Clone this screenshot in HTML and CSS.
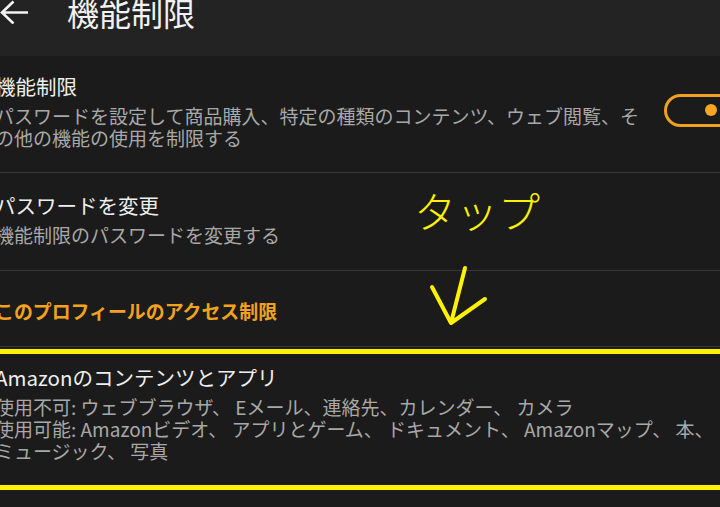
FILE: index.html
```html
<!DOCTYPE html>
<html lang="ja">
<head>
  <meta charset="UTF-8">
  <meta name="viewport" content="width=device-width, initial-scale=1">
  <title>機能制限</title>
  <link rel="stylesheet" href="styles.css">
</head>
<body>

<header class="app-bar">
  <svg class="back" width="28" height="24" viewBox="0 0 28 24">
    <path d="M28 12.5 H2 M13.5 1.5 L2 12.5 L13.5 23.5" fill="none" stroke="#f2f2f2" stroke-width="2.6"/>
  </svg>
  <h1>機能制限</h1>
</header>

<main class="list">
  <!-- main switch -->
  <div class="row">
    <div class="row-text">
      <div class="row-title">機能制限</div>
      <div class="row-sub">パスワードを設定して商品購入、特定の種類のコンテンツ、ウェブ閲覧、その他の機能の使用を制限する</div>
    </div>
    <span class="toggle on"></span>
  </div>

  <div class="row">
    <div class="row-text">
      <div class="row-title">パスワードを変更</div>
      <div class="row-sub">機能制限のパスワードを変更する</div>
    </div>
  </div>

  <div class="section-label">このプロフィールのアクセス制限</div>

  <div class="row marked">
    <div class="row-text">
      <div class="row-title">Amazonのコンテンツとアプリ</div>
      <div class="row-sub">使用不可: ウェブブラウザ、 Eメール、連絡先、カレンダー、 カメラ</div>
      <div class="row-sub">使用可能: Amazonビデオ、 アプリとゲーム、 ドキュメント、 Amazonマップ、 本、 ミュージック、 写真</div>
    </div>
  </div>

  <div class="row">
    <div class="row-text">
      <div class="row-title">ウェブ、ソーシャルネットワーク、共有</div>
    </div>
  </div>
</main>

<!-- hand-drawn annotation -->
<div class="tap-note">タップ</div>
<svg class="tap-arrow" width="70" height="68" viewBox="0 0 70 68">
  <path d="M40 6 L26 61 M7 25 L26 61 L60 37" fill="none" stroke="#fff200" stroke-width="4" stroke-linecap="round" stroke-linejoin="round"/>
</svg>

</body>
</html>
```

FILE: styles.css
```css
body { margin: 0; background: #1b1b1b; color: #eeeeee; font-family: "Noto Sans CJK JP", "Noto Sans", sans-serif; width: 720px; height: 507px; overflow: hidden; position: relative; }

.app-bar { height: 56px; box-sizing: border-box; padding-bottom: 32px; background: #232323; display: flex; align-items: center; }
.app-bar .back { flex: none; }
.app-bar h1 { margin: 0 0 0 39px; font-size: 32px; line-height: 32px; font-weight: 400; color: #f2f2f2; }

.list { margin: 0 -20px 0 -5px; }
.row { display: flex; align-items: center; min-height: 98px; box-sizing: border-box; padding: 16px 24px 23px 0; border-bottom: 1px solid #383838; position: relative; }
.row-text { flex: 1; min-width: 0; }
.row-title { font-size: 20.5px; line-height: 28px; color: #efefef; margin-bottom: 5px; }
.row-sub { font-size: 19px; line-height: 22px; color: #a8a8a8; }

.toggle { flex: none; width: 72px; height: 33px; margin: 0 -20px 0 20px; box-sizing: border-box; border: 3px solid #f0a11d; border-radius: 17px; position: relative; }
.toggle.on::after { content: ""; position: absolute; left: 38px; top: 7px; width: 12px; height: 12px; border-radius: 50%; background: #f5a623; }

.section-label { padding: 26px 0 21px; font-size: 18.9px; line-height: 28px; font-weight: 700; color: #f3a21f; border-bottom: 1px solid #3a3630; }

.marked::after { content: ""; position: absolute; top: 2px; bottom: -5px; left: -10px; right: -10px; border: 5px solid #fff200; pointer-events: none; }

.tap-note { position: absolute; left: 414px; top: 189px; font-size: 42px; line-height: 42px; font-weight: 300; color: #fff200; }
.tap-arrow { position: absolute; left: 425px; top: 262px; }
```
